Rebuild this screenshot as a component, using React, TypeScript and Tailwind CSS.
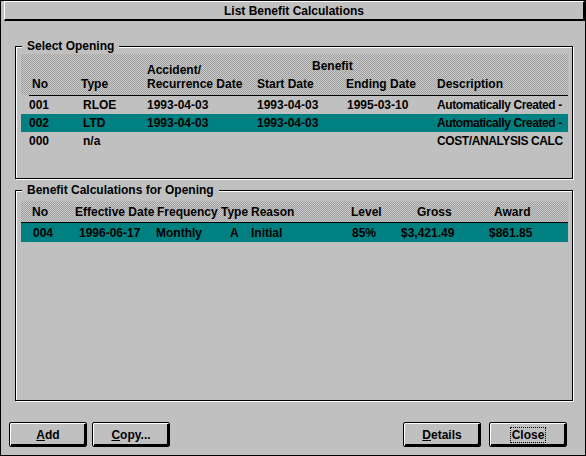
import React from 'react';

const hatch = 'bg-[image:repeating-conic-gradient(#a0a0a0_0_25%,#c8c8c8_0_50%)] bg-[length:2px_2px]';

type Opening = {
  no: string;
  type: string;
  accident: string;
  start: string;
  end: string;
  desc: string;
  selected?: boolean;
};

const openings: Opening[] = [
  { no: '001', type: 'RLOE', accident: '1993-04-03', start: '1993-04-03', end: '1995-03-10', desc: 'Automatically Created -' },
  { no: '002', type: 'LTD', accident: '1993-04-03', start: '1993-04-03', end: '', desc: 'Automatically Created -', selected: true },
  { no: '000', type: 'n/a', accident: '', start: '', end: '', desc: 'COST/ANALYSIS CALC' },
];

function GroupBox({ title, className, children }: { title: string; className: string; children: React.ReactNode }) {
  return (
    <div className={`relative ml-[14px] w-[558px] border border-black shadow-[1px_1px_0_#fff,inset_1px_1px_0_#fff] ${className}`}>
      <span className="absolute -top-[8px] left-[6px] bg-[#c0c0c0] px-[5px] leading-[14px]">{title}</span>
      {children}
    </div>
  );
}

function Btn({ first, rest, focus }: { first: string; rest: string; focus?: boolean }) {
  return (
    <button className="flex h-[25px] w-[78px] items-center justify-center rounded-[2px] border border-black bg-[#c0c0c0] shadow-[inset_1px_1px_0_#fff,inset_-2px_-2px_0_#000]">
      <span className={focus ? 'border border-dotted border-black px-px leading-[14px]' : 'leading-[14px]'}>
        <span className={focus ? '' : 'underline'}>{first}</span>
        {rest}
      </span>
    </button>
  );
}

export default function App() {
  return (
    <div className="flex h-[456px] w-[586px] flex-col border border-black bg-[#c0c0c0] font-['Liberation_Sans',Arial,sans-serif] text-[12px] font-bold text-black">
      <div className="ml-[3px] h-[20px] border-t border-l border-t-white border-l-white border-b-2 border-r-2 border-b-black border-r-black pt-[2px] text-center leading-[15px]">
        List Benefit Calculations
      </div>

      <GroupBox title="Select Opening" className="mt-[25px] h-[133px] pl-[5px] pt-[7px]">
        <div className="w-[547px]">
          <div className={`${hatch} grid h-[41px] grid-cols-[52px_66px_110px_89px_91px_1fr] grid-rows-[18px_14px] pl-[8px] pt-[5px] leading-[14px]`}>
            <div className="col-start-3 row-start-1 pt-[4px]">Accident/</div>
            <div className="col-span-2 col-start-4 row-start-1 pl-[55px]">Benefit</div>
            <div className="col-start-1 row-start-2 pl-[3px]">No</div>
            <div className="col-start-2 row-start-2">Type</div>
            <div className="col-start-3 row-start-2 whitespace-nowrap">Recurrence Date</div>
            <div className="col-start-4 row-start-2">Start Date</div>
            <div className="col-start-5 row-start-2">Ending Date</div>
            <div className="col-start-6 row-start-2">Description</div>
          </div>
          <div className="ml-[8px] h-px bg-black" />
          {openings.map((o) => (
            <div
              key={o.no}
              className={`grid h-[18px] grid-cols-[52px_66px_110px_89px_91px_1fr] items-center whitespace-nowrap pl-[8px] leading-[14px] ${o.selected ? 'bg-[#008080]' : ''}`}
            >
              <div>{o.no}</div>
              <div className="pl-[2px]">{o.type}</div>
              <div>{o.accident}</div>
              <div>{o.start}</div>
              <div className="pl-px">{o.end}</div>
              <div className="tracking-[-0.4px]">{o.desc}</div>
            </div>
          ))}
        </div>
      </GroupBox>

      <GroupBox title="Benefit Calculations for Opening" className="mt-[11px] h-[211px] pl-[5px] pt-[10px]">
        <div className="w-[547px]">
          <div className={`${hatch} grid h-[21px] grid-cols-[43px_81px_65px_30px_100px_50px_88px_1fr] items-center whitespace-nowrap pl-[11px] leading-[14px]`}>
            <div>No</div>
            <div>Effective Date</div>
            <div className="pl-px">Frequency</div>
            <div>Type</div>
            <div>Reason</div>
            <div>Level</div>
            <div className="pl-[16px]">Gross</div>
            <div className="pl-[5px]">Award</div>
          </div>
          <div className="h-px bg-black" />
          <div className="grid h-[19px] grid-cols-[43px_81px_65px_30px_100px_50px_88px_1fr] items-center whitespace-nowrap bg-[#008080] pl-[11px] leading-[14px]">
            <div className="pl-px">004</div>
            <div className="pl-[4px]">1996-06-17</div>
            <div>Monthly</div>
            <div className="pl-[9px]">A</div>
            <div>Initial</div>
            <div className="pl-px">85%</div>
            <div>$3,421.49</div>
            <div>$861.85</div>
          </div>
        </div>
      </GroupBox>

      <div className="ml-[8px] mr-[18px] mt-[21px] flex">
        <div className="flex gap-[5px]">
          <Btn first="A" rest="dd" />
          <Btn first="C" rest="opy..." />
        </div>
        <div className="ml-auto flex gap-[8px]">
          <Btn first="D" rest="etails" />
          <Btn first="C" rest="lose" focus />
        </div>
      </div>
    </div>
  );
}
